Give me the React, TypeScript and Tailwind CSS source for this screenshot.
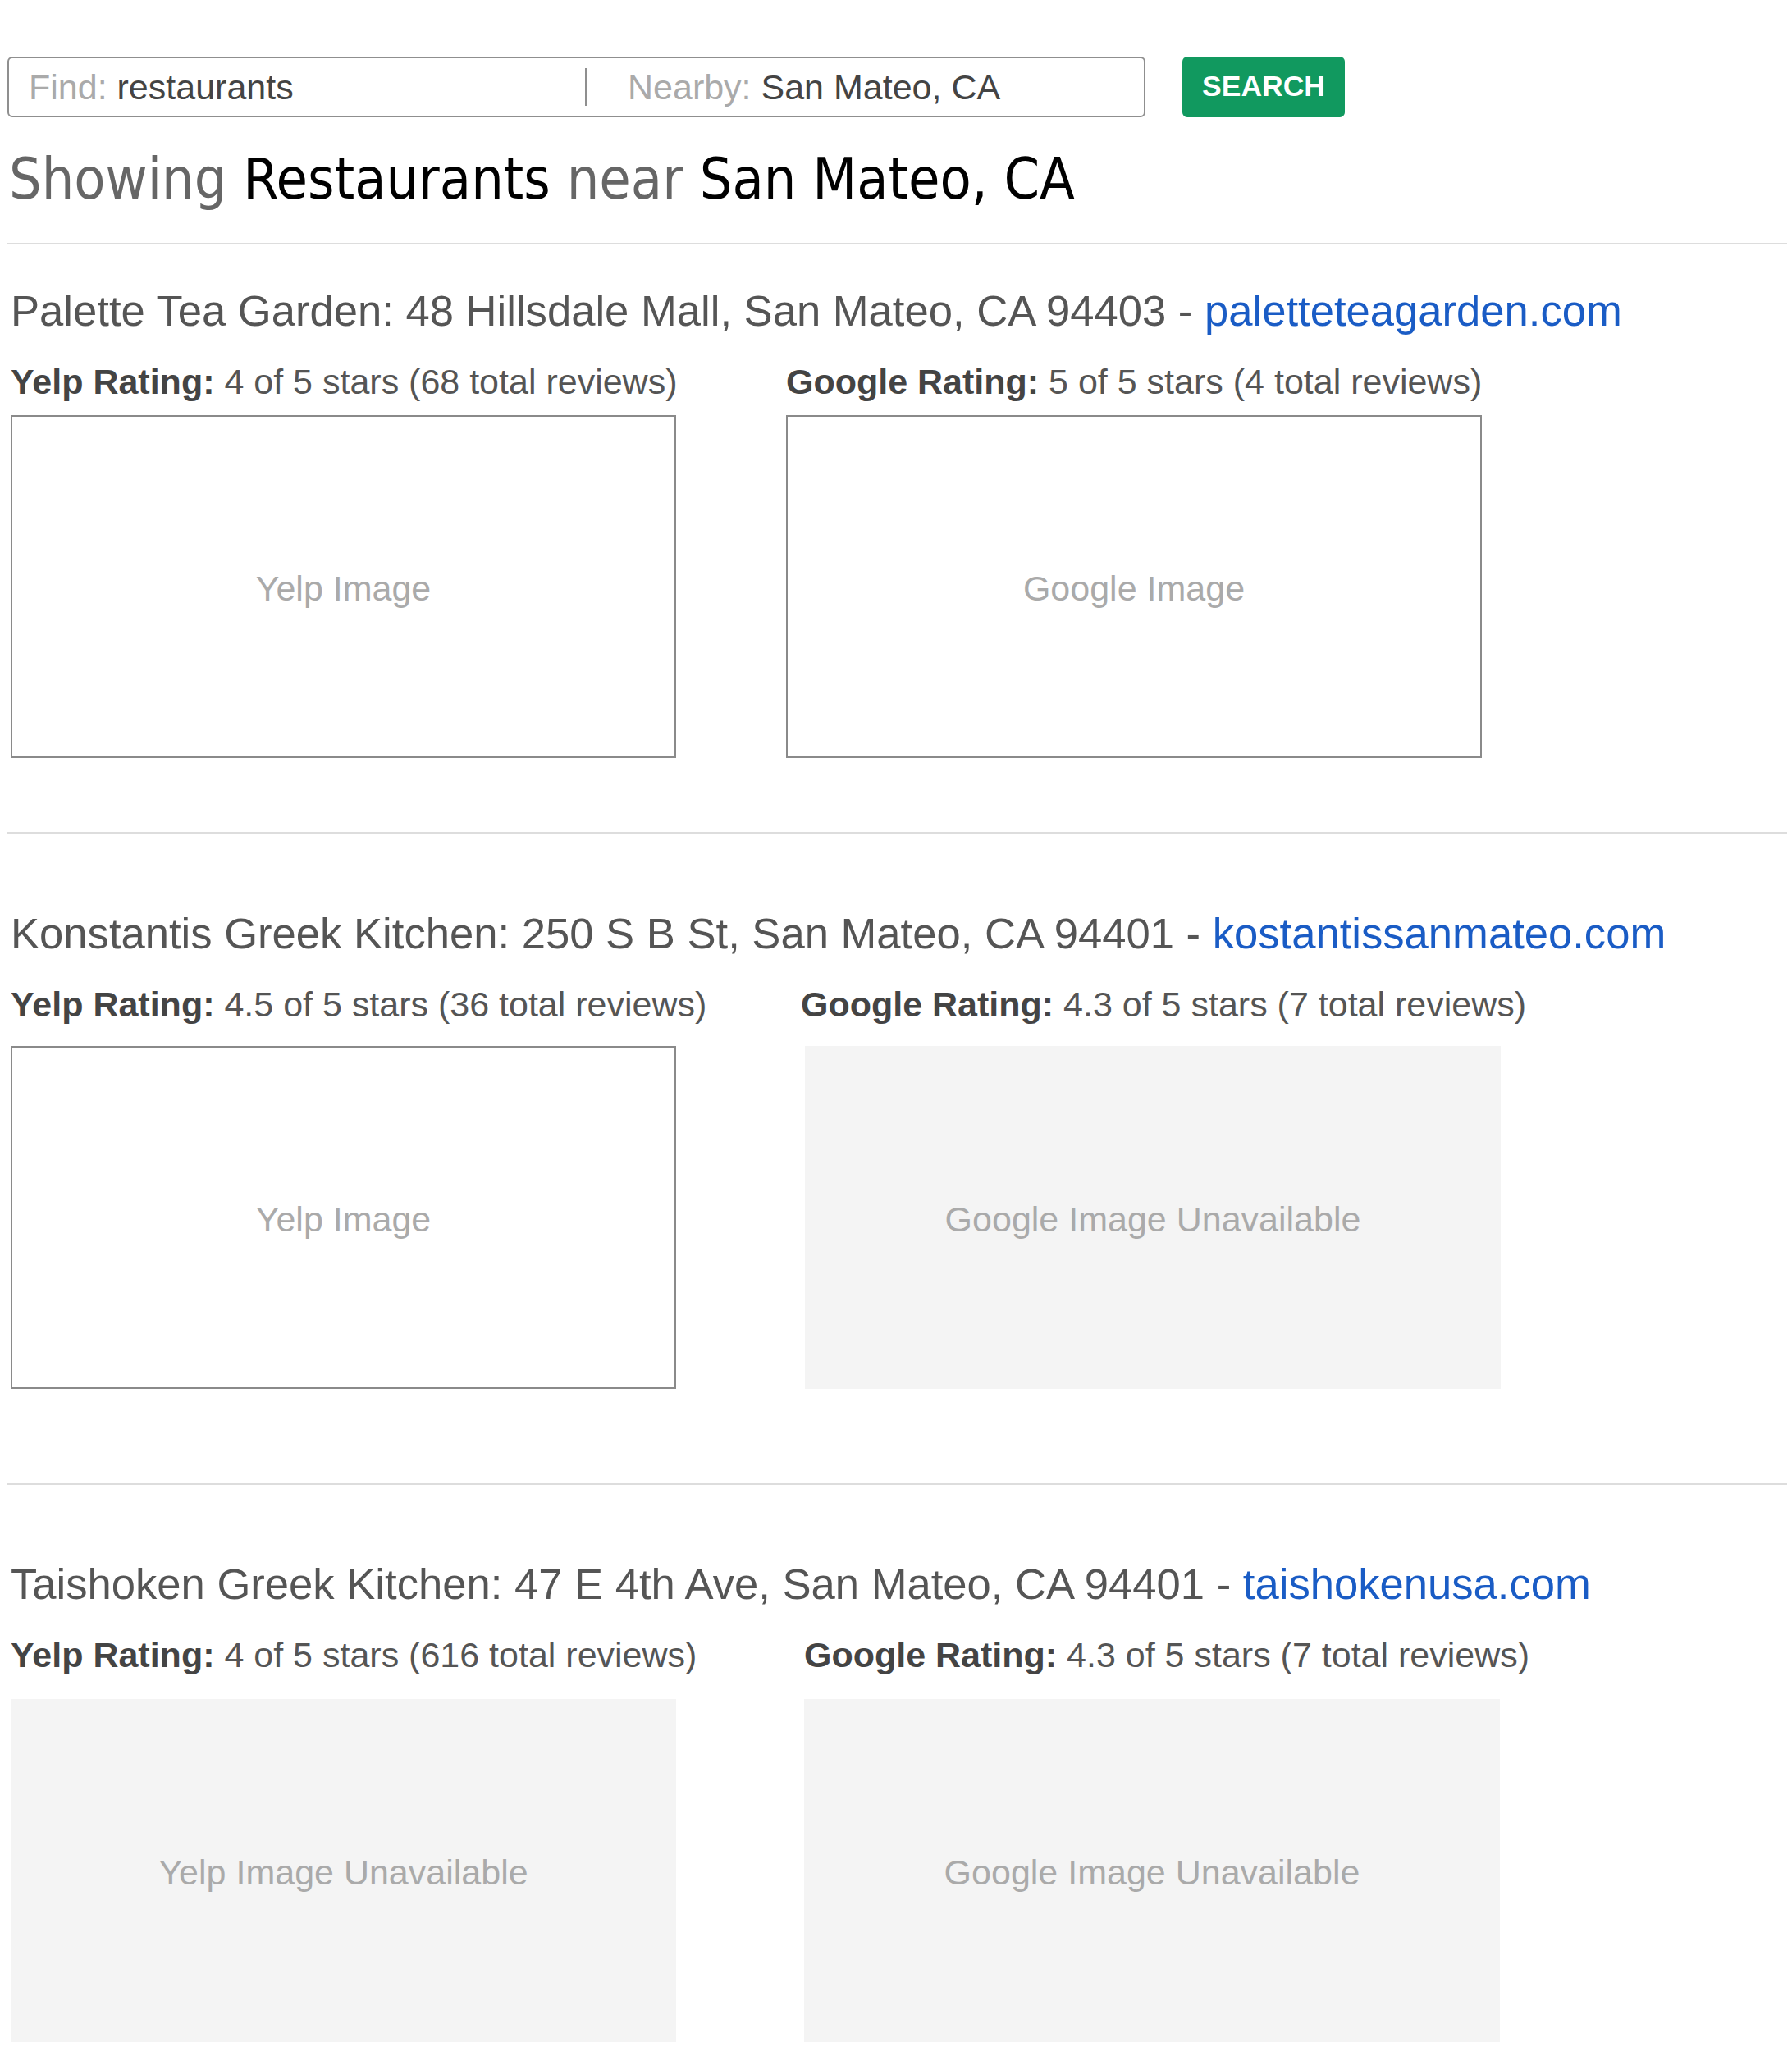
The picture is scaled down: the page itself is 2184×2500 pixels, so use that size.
import React from 'react';

type Restaurant = {
  name: string;
  address: string;
  site: string;
  yelp: string;
  google: string;
  yelpImage: boolean;
  googleImage: boolean;
  titleGap: string;
  boxGap: string;
  yelpCol: string;
  googleBoxShift: string;
};

const restaurants: Restaurant[] = [
  {
    name: 'Palette Tea Garden',
    address: '48 Hillsdale Mall, San Mateo, CA 94403',
    site: 'paletteteagarden.com',
    yelp: '4 of 5 stars (68 total reviews)',
    google: '5 of 5 stars (4 total reviews)',
    yelpImage: true,
    googleImage: true,
    titleGap: 'mt-[51px]',
    boxGap: 'mt-[16px]',
    yelpCol: 'w-[945px]',
    googleBoxShift: '',
  },
  {
    name: 'Konstantis Greek Kitchen',
    address: '250 S B St, San Mateo, CA 94401',
    site: 'kostantissanmateo.com',
    yelp: '4.5 of 5 stars (36 total reviews)',
    google: '4.3 of 5 stars (7 total reviews)',
    yelpImage: true,
    googleImage: false,
    titleGap: 'mt-[92px]',
    boxGap: 'mt-[26px]',
    yelpCol: 'w-[963px]',
    googleBoxShift: 'ml-[5px] mt-[6px]',
  },
  {
    name: 'Taishoken Greek Kitchen',
    address: '47 E 4th Ave, San Mateo, CA 94401',
    site: 'taishokenusa.com',
    yelp: '4 of 5 stars (616 total reviews)',
    google: '4.3 of 5 stars (7 total reviews)',
    yelpImage: false,
    googleImage: false,
    titleGap: 'mt-[91px]',
    boxGap: 'mt-[29px]',
    yelpCol: 'w-[967px]',
    googleBoxShift: '',
  },
];

function ImageBox({ label, available, width }: { label: string; available: boolean; width: string }) {
  if (available) {
    return (
      <div className={`${width} h-[418px] border-2 border-[#8a8a8a] flex items-center justify-center pt-[4px] text-[43px] text-[#aaaaaa]`}>
        {label} Image
      </div>
    );
  }
  return (
    <div className={`${width} h-[418px] bg-[#f4f4f4] flex items-center justify-center pt-[4px] text-[43px] text-[#aaaaaa]`}>
      {label} Image Unavailable
    </div>
  );
}

function RestaurantCard({ r }: { r: Restaurant }) {
  return (
    <section className="pl-[5px]">
      <h2 className={`${r.titleGap} text-[52.6px] leading-[60px] text-[#555555] whitespace-nowrap`}>
        {r.name}: {r.address} - <a className="text-[#1a5cc5]">{r.site}</a>
      </h2>
      <div className="flex">
        <div className={`${r.yelpCol} shrink-0`}>
          <div className="mt-[31px] text-[43px] leading-[50px] text-[#555555] whitespace-nowrap">
            <b className="text-[#444444]">Yelp Rating:</b> {r.yelp}
          </div>
          <div className={r.boxGap}>
            <ImageBox label="Yelp" available={r.yelpImage} width="w-[811px]" />
          </div>
        </div>
        <div className="shrink-0">
          <div className="mt-[31px] text-[43px] leading-[50px] text-[#555555] whitespace-nowrap">
            <b className="text-[#444444]">Google Rating:</b> {r.google}
          </div>
          <div className={r.boxGap}>
            <div className={r.googleBoxShift}>
              <ImageBox label="Google" available={r.googleImage} width="w-[848px]" />
            </div>
          </div>
        </div>
      </div>
    </section>
  );
}

export default function App() {
  return (
    <div className="min-h-[2500px] bg-white pl-[8px] pr-[6px] font-['Liberation_Sans',Arial,sans-serif]">
      {/* search bar */}
      <div className="pt-[69px] flex items-center">
        <div className="ml-[1px] w-[1387px] h-[74px] border-2 border-[#8f8f8f] rounded-[6px] flex items-center text-[43px]">
          <div className="w-[702px] pl-[24px] whitespace-nowrap">
            <span className="text-[#aaaaaa]">Find: </span>
            <span className="text-[#444444]">restaurants</span>
          </div>
          <div className="w-[2px] h-[46px] bg-[#8f8f8f]" />
          <div className="pl-[50px] whitespace-nowrap">
            <span className="text-[#aaaaaa]">Nearby: </span>
            <span className="text-[#444444]">San Mateo, CA</span>
          </div>
        </div>
        <button className="ml-[45px] w-[198px] h-[74px] rounded-[6px] bg-[#11995f] text-white text-[35.5px] font-bold">
          SEARCH
        </button>
      </div>

      <h1 className="mt-[35px] ml-[3px] text-[69.5px] leading-[80px] font-['DejaVu_Sans_Condensed','DejaVu_Sans',sans-serif] [font-stretch:condensed] whitespace-nowrap">
        <span className="text-[#666666]">Showing </span>
        <span className="text-black">Restaurants</span>
        <span className="text-[#666666]"> near </span>
        <span className="text-black">San Mateo, CA</span>
      </h1>

      <hr className="mt-[38px] border-0 h-[2px] bg-[#dddddd]" />
      <RestaurantCard r={restaurants[0]} />
      <hr className="mt-[90px] border-0 h-[2px] bg-[#dddddd]" />
      <RestaurantCard r={restaurants[1]} />
      <hr className="mt-[115px] border-0 h-[2px] bg-[#dddddd]" />
      <RestaurantCard r={restaurants[2]} />
    </div>
  );
}
